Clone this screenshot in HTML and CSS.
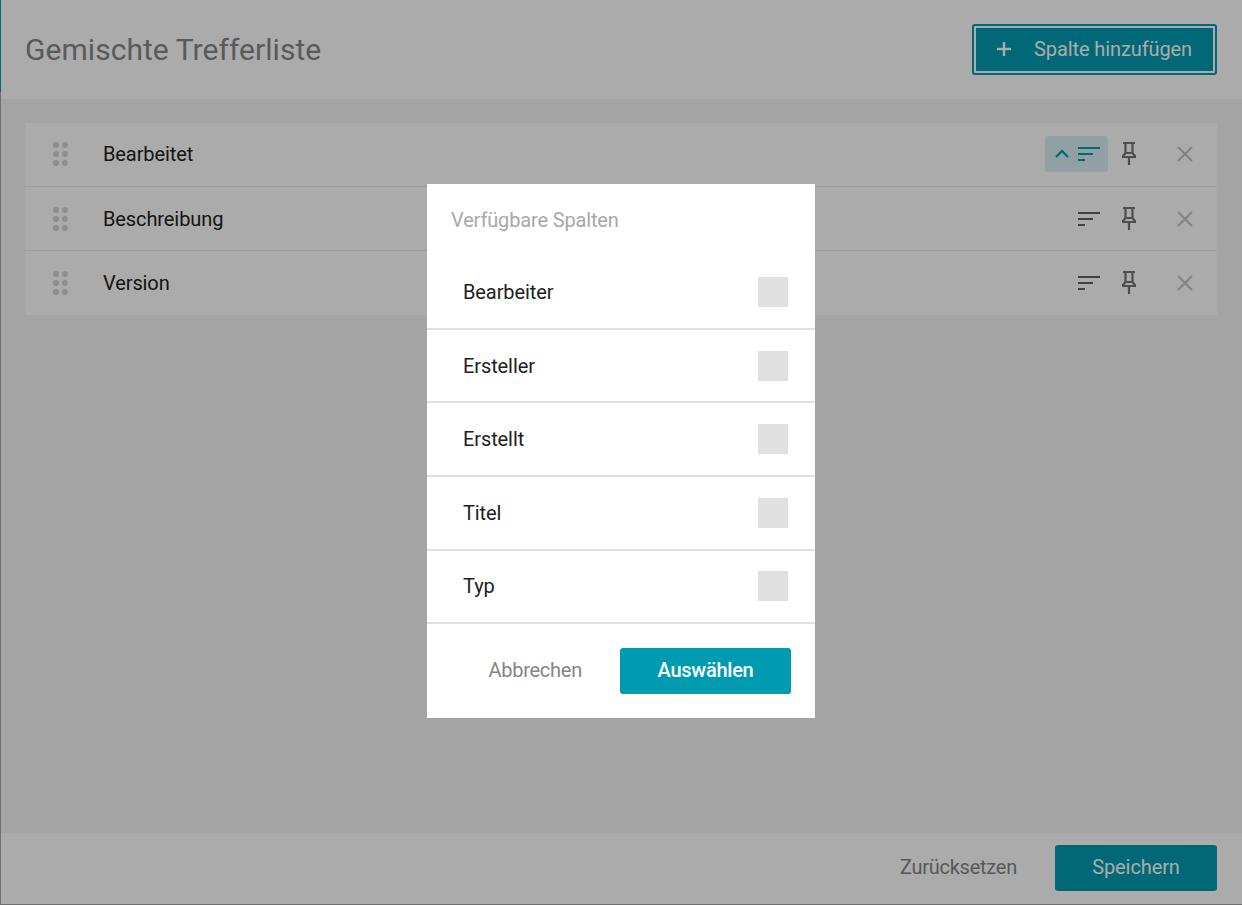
FILE: index.html
```html
<!DOCTYPE html>
<html lang="de">
<head>
<meta charset="utf-8">
<title>Gemischte Trefferliste</title>
<link rel="stylesheet" href="styles.css">
</head>
<body>
<div class="app">
  <header class="header">
    <h1 class="title">Gemischte Trefferliste</h1>
    <button class="add-btn"><svg class="plus" width="16" height="16" viewBox="0 0 16 16"><path d="M8 1v14M1 8h14" stroke="currentColor" stroke-width="2.4" fill="none"/></svg><span>Spalte hinzufügen</span></button>
  </header>
  <main class="content">
    <div class="list">
      <div class="row">
        <svg class="grip" width="16" height="26" viewBox="0 0 16 26"><g fill="#d3d3d3"><circle cx="3" cy="4" r="3"/><circle cx="12" cy="4" r="3"/><circle cx="3" cy="13" r="3"/><circle cx="12" cy="13" r="3"/><circle cx="3" cy="22" r="3"/><circle cx="12" cy="22" r="3"/></g></svg>
        <span class="row-label">Bearbeitet</span>
        <div class="actions">
          <div class="sort active">
            <svg class="chev" width="14" height="10" viewBox="0 0 14 10"><path d="M1 8l6-6 6 6" stroke="currentColor" stroke-width="2.2" fill="none"/></svg>
            <svg class="sort-ico" width="22" height="14" viewBox="0 0 22 14"><path d="M0 1h22M0 7h15M0 13h7" stroke="currentColor" stroke-width="2.2" fill="none"/></svg>
          </div>
          <svg class="pin" width="14" height="23" viewBox="0 0 14 23"><path d="M1 1h12M3.500 1v10.500M10.500 1v10.500M3.500 11L1 14v1h12v-1l-2.500-3zM7 15v8" stroke="currentColor" stroke-width="2.2" fill="none"/></svg>
          <svg class="close" width="16" height="16" viewBox="0 0 16 16"><path d="M1 1l14 14M15 1L1 15" stroke="currentColor" stroke-width="2" fill="none"/></svg>
        </div>
      </div>
      <div class="row">
        <svg class="grip" width="16" height="26" viewBox="0 0 16 26"><g fill="#d3d3d3"><circle cx="3" cy="4" r="3"/><circle cx="12" cy="4" r="3"/><circle cx="3" cy="13" r="3"/><circle cx="12" cy="13" r="3"/><circle cx="3" cy="22" r="3"/><circle cx="12" cy="22" r="3"/></g></svg>
        <span class="row-label">Beschreibung</span>
        <div class="actions">
          <div class="sort">
            <svg class="sort-ico" width="22" height="14" viewBox="0 0 22 14"><path d="M0 1h22M0 7h15M0 13h7" stroke="currentColor" stroke-width="2.2" fill="none"/></svg>
          </div>
          <svg class="pin" width="14" height="23" viewBox="0 0 14 23"><path d="M1 1h12M3.500 1v10.500M10.500 1v10.500M3.500 11L1 14v1h12v-1l-2.500-3zM7 15v8" stroke="currentColor" stroke-width="2.2" fill="none"/></svg>
          <svg class="close" width="16" height="16" viewBox="0 0 16 16"><path d="M1 1l14 14M15 1L1 15" stroke="currentColor" stroke-width="2" fill="none"/></svg>
        </div>
      </div>
      <div class="row">
        <svg class="grip" width="16" height="26" viewBox="0 0 16 26"><g fill="#d3d3d3"><circle cx="3" cy="4" r="3"/><circle cx="12" cy="4" r="3"/><circle cx="3" cy="13" r="3"/><circle cx="12" cy="13" r="3"/><circle cx="3" cy="22" r="3"/><circle cx="12" cy="22" r="3"/></g></svg>
        <span class="row-label">Version</span>
        <div class="actions">
          <div class="sort">
            <svg class="sort-ico" width="22" height="14" viewBox="0 0 22 14"><path d="M0 1h22M0 7h15M0 13h7" stroke="currentColor" stroke-width="2.2" fill="none"/></svg>
          </div>
          <svg class="pin" width="14" height="23" viewBox="0 0 14 23"><path d="M1 1h12M3.500 1v10.500M10.500 1v10.500M3.500 11L1 14v1h12v-1l-2.500-3zM7 15v8" stroke="currentColor" stroke-width="2.2" fill="none"/></svg>
          <svg class="close" width="16" height="16" viewBox="0 0 16 16"><path d="M1 1l14 14M15 1L1 15" stroke="currentColor" stroke-width="2" fill="none"/></svg>
        </div>
      </div>
    </div>
  </main>
  <footer class="footer">
    <button class="text-btn">Zurücksetzen</button>
    <button class="primary save">Speichern</button>
  </footer>
</div>
<div class="overlay"></div>
<div class="modal">
  <div class="modal-title">Verfügbare Spalten</div>
  <div class="options">
    <div class="option"><span>Bearbeiter</span><i class="check"></i></div>
    <div class="option"><span>Ersteller</span><i class="check"></i></div>
    <div class="option"><span>Erstellt</span><i class="check"></i></div>
    <div class="option"><span>Titel</span><i class="check"></i></div>
    <div class="option"><span>Typ</span><i class="check"></i></div>
  </div>
  <div class="modal-foot">
    <button class="text-btn">Abbrechen</button>
    <button class="primary choose">Auswählen</button>
  </div>
</div>
</body>
</html>
```
FILE: styles.css
```css
* { box-sizing: border-box; }
html, body { margin: 0; height: 905px; overflow: hidden; }
body { font-family: Roboto, "Liberation Sans", sans-serif; background: #a6a6a6; position: relative; letter-spacing: -.1px; }
button { font-family: inherit; letter-spacing: inherit; border: 0; background: none; padding: 0; cursor: pointer; }

.app { height: 904px; margin-left: 1px; margin-bottom: 2px; display: flex; flex-direction: column; background: #f5f5f5; position: relative; }
.app::before { content: ""; position: absolute; left: -1px; top: 0; width: 1px; height: 92px; background: #009bb0; }

.header { height: 99px; background: #fff; display: flex; align-items: center; justify-content: space-between; padding: 0 25px 0 24px; }
.title { margin: 0; font-size: 30px; font-weight: 400; letter-spacing: .05px; color: #878787; }
.add-btn { width: 245px; height: 51px; background: #009bb0; border-radius: 3px; color: #fff; font-size: 20px; display: flex; align-items: center; padding: 0 0 1px 21px; border: 3px solid #009bb0; outline: 2px solid #fff; outline-offset: -4px; }
.plus { margin-right: 22px; }

.content { flex: 1; padding: 24px 25px 0 24px; }
.list { display: flex; flex-direction: column; }
.row { height: 64px; background: #fff; border-bottom: 1px solid #ececec; display: flex; align-items: center; padding: 0 25px 0 28px; }
.row:first-child { padding-bottom: 1.2px; }
.row:last-child { border-bottom-color: #fff; }
.row-label { margin-left: 34px; font-size: 20px; color: #212121; }
.actions { margin-left: auto; display: flex; align-items: center; color: #616161; }
.sort { display: flex; align-items: center; justify-content: flex-end; width: 63px; height: 36px; padding-right: 8px; border-radius: 3px; gap: 9px; }
.sort.active { background: #d9f0f3; color: #009bb0; }
.chev { color: #009bb0; }
.sort-ico { display: block; }
.pin { margin-left: 14px; color: #757575; }
.close { margin-left: 41px; margin-right: -1px; color: #c4c4c4; }

.footer { height: 71px; background: #fff; display: flex; align-items: center; justify-content: flex-end; padding: 0 25px 2px 0; }
.text-btn { font-size: 20px; color: #858585; letter-spacing: -.25px; margin-bottom: 2px; }
.primary { height: 46px; background: #009bb0; color: #fff; font-size: 20px; font-weight: 500; border-radius: 3px; padding-bottom: 2px; letter-spacing: -.25px; }
.save { width: 162px; margin-left: 38px; font-weight: 400; letter-spacing: -.1px; }

.overlay { position: absolute; inset: 0; background: rgba(0, 0, 0, .33); }
.modal { position: absolute; left: 427px; top: 184px; width: 388px; height: 534px; background: #fff; }
.modal-title { padding: 24px 24px 0; height: 72.2px; font-size: 20px; color: #a8a8a8; line-height: 24px; letter-spacing: -.15px; }
.option { height: 73.6px; display: flex; align-items: center; justify-content: space-between; padding: 0 27px 0 36px; border-bottom: 2px solid #e0e0e0; font-size: 20px; color: #212121; }
.check { width: 30px; height: 30px; background: #e0e0e0; display: block; }
.modal-foot { display: flex; align-items: center; justify-content: flex-end; padding: 24px 24px 0 0; }
.choose { width: 171px; margin-left: 38px; }
```
